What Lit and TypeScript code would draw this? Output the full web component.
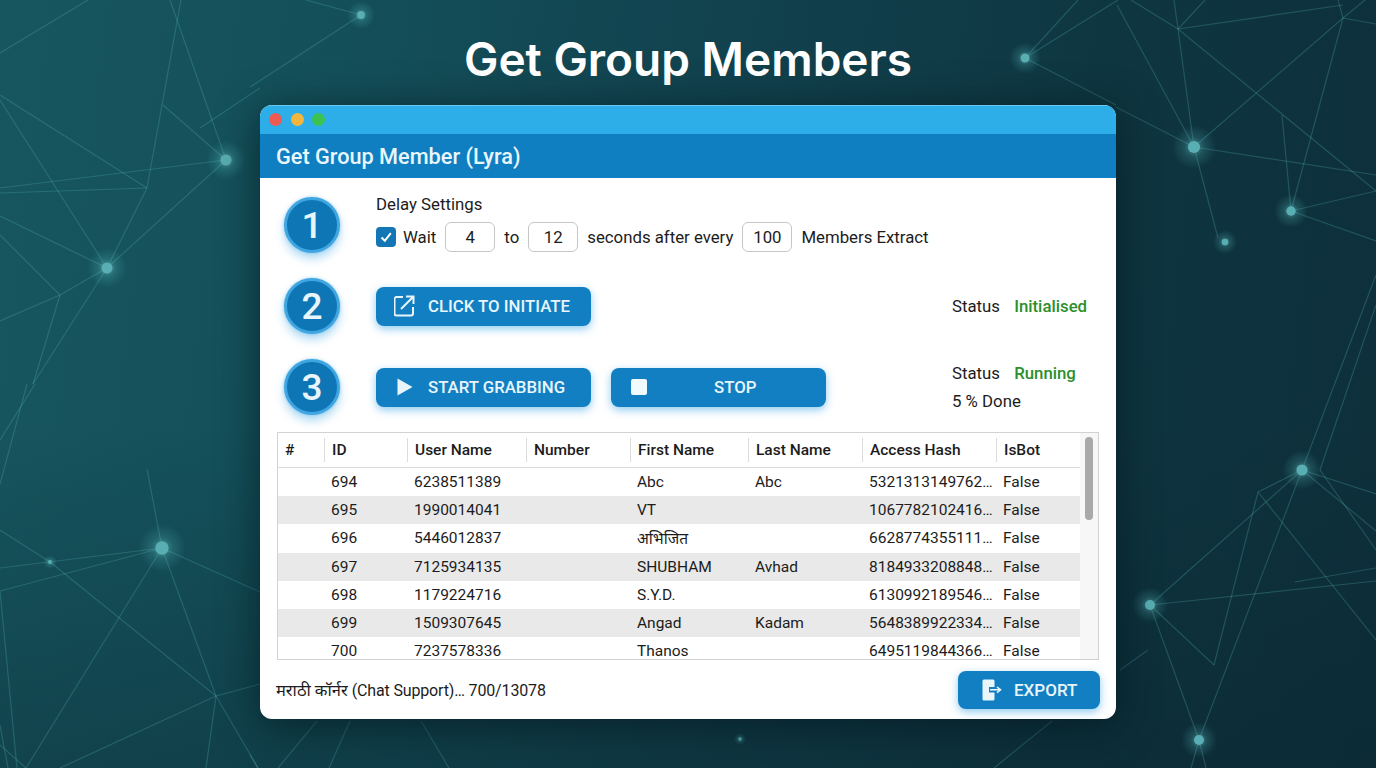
import { LitElement, html, css, svg } from "lit";
import { customElement } from "lit/decorators.js";

// fondo: nodos brillantes [x, y, radio del halo]
const NODES: number[][] = [
  [226, 160, 20], [107, 268, 20], [361, 15, 14], [1025, 58, 16], [1194, 147, 22],
  [1291, 211, 17], [1225, 242, 12], [1302, 470, 20], [1150, 605, 18], [1199, 740, 18],
  [162, 548, 24], [50, 562, 7], [740, 739, 6],
];

// fondo: segmentos [x1, y1, x2, y2]
const LINES: number[][] = [
  [0, 53, 88, 0], [170, 0, 226, 160], [181, 0, 147, 188], [147, 188, 107, 268],
  [0, 95, 147, 188], [0, 100, 107, 268], [0, 188, 226, 160], [0, 193, 147, 188],
  [0, 216, 107, 268], [0, 235, 60, 295], [107, 268, 60, 295], [60, 295, 0, 321],
  [60, 295, 33, 384], [107, 268, 33, 384], [226, 160, 107, 268], [163, 105, 226, 160],
  [200, 128, 260, 88], [306, 0, 361, 15], [361, 15, 250, 87],
  [1025, 58, 1078, 0], [1025, 58, 1118, 0], [1025, 58, 1116, 105],
  [1117, 5, 1194, 147], [1131, 0, 1178, 29], [1174, 0, 1178, 29], [1178, 29, 1194, 147],
  [1205, 0, 1178, 29], [1178, 29, 1343, 5], [1178, 29, 1376, 191], [1194, 147, 1343, 18],
  [1343, 18, 1338, 0], [1343, 18, 1365, 0], [1343, 18, 1376, 24], [1343, 18, 1291, 211],
  [1282, 115, 1291, 211], [1116, 107, 1194, 147], [1194, 147, 1376, 175], [1194, 147, 1218, 238],
  [1291, 211, 1376, 191], [1291, 211, 1376, 241], [1376, 275, 1302, 470], [1376, 305, 1320, 470],
  [1302, 470, 1376, 494], [1302, 470, 1376, 531], [1302, 470, 1150, 605], [1302, 470, 1258, 492],
  [1258, 492, 1214, 665], [1214, 665, 1150, 605], [1258, 492, 1376, 640], [1150, 605, 1376, 581],
  [1295, 582, 1376, 568], [1150, 605, 1199, 740], [1302, 470, 1199, 740], [1120, 670, 1148, 650],
  [1199, 740, 1191, 768], [1199, 740, 1206, 768], [1320, 470, 1376, 550],
  [35, 384, 0, 440], [27, 384, 0, 484], [147, 469, 162, 548], [162, 548, 0, 568],
  [162, 548, 0, 591], [0, 530, 50, 562], [50, 562, 216, 696], [162, 548, 260, 592],
  [162, 548, 216, 696], [162, 548, 26, 768], [216, 696, 260, 684], [216, 696, 60, 768],
  [216, 696, 258, 768], [216, 696, 206, 768], [0, 591, 17, 768], [0, 745, 26, 768], [0, 725, 8, 768],
  [317, 721, 278, 768], [350, 721, 329, 768], [421, 721, 449, 768], [1052, 721, 994, 768],
  [250, 755, 258, 768],
];

const ROWS: string[][] = [
  ["694", "6238511389", "", "Abc", "Abc", "5321313149762…", "False"],
  ["695", "1990014041", "", "VT", "", "1067782102416…", "False"],
  ["696", "5446012837", "", "अभिजित", "", "6628774355111…", "False"],
  ["697", "7125934135", "", "SHUBHAM", "Avhad", "8184933208848…", "False"],
  ["698", "1179224716", "", "S.Y.D.", "", "6130992189546…", "False"],
  ["699", "1509307645", "", "Angad", "Kadam", "5648389922334…", "False"],
  ["700", "7237578336", "", "Thanos", "", "6495119844366…", "False"],
];

const HEADERS = ["#", "ID", "User Name", "Number", "First Name", "Last Name", "Access Hash", "IsBot"];
const WIDTHS = [46, 83, 119, 104, 118, 114, 134, 84];

@customElement("app-root")
export class AppRoot extends LitElement {
  static styles = css`
    :host {
      display: block;
      position: relative;
      height: 768px;
      overflow: hidden;
      font-family: Roboto, "Noto Sans", sans-serif;
      font-size: 16.8px;
      color: #1c1c1c;
      background:
        linear-gradient(180deg, rgba(12, 40, 50, 0) 55%, rgba(10, 36, 46, 0.35) 100%),
        linear-gradient(97deg, #17565f 0%, #14505a 22%, #11424e 50%, #0e3540 78%, #0d2f3b 100%);
    }
    .net {
      position: absolute;
      inset: 0;
      filter: blur(0.35px);
    }
    .page {
      position: relative;
      display: flex;
      flex-direction: column;
      align-items: center;
    }
    h1 {
      margin: 0;
      padding-top: 31px;
      height: 105px;
      flex: none;
      box-sizing: border-box;
      font-family: Inter, sans-serif;
      font-size: 46px;
      line-height: 56px;
      font-weight: 600;
      color: #fff;
    }
    .window {
      width: 856px;
      height: 614px;
      flex: none;
      background: #fff;
      border-radius: 12px;
      overflow: hidden;
      box-shadow: 0 6px 40px rgba(3, 20, 26, 0.65);
      display: flex;
      flex-direction: column;
    }
    .titlebar {
      height: 29px;
      flex: none;
      display: flex;
      align-items: center;
      gap: 8.5px;
      padding-left: 9px;
      box-sizing: border-box;
      background: #2daee9;
      box-shadow: inset 0 1px 0 #6cc8f0;
    }
    .dot {
      width: 13px;
      height: 13px;
      border-radius: 50%;
    }
    .header {
      height: 44px;
      flex: none;
      padding-left: 16px;
      display: flex;
      align-items: center;
      background: #0f7fc1;
      color: #e9f7fd;
      font-size: 21.7px;
      font-weight: 500;
    }
    .step {
      display: flex;
      padding-left: 24px;
    }
    .step.one {
      margin-top: 16px;
      align-items: flex-start;
    }
    .step.two {
      margin-top: 25px;
      align-items: center;
    }
    .step.three {
      margin-top: 25px;
      align-items: center;
    }
    .num {
      width: 56px;
      height: 56px;
      flex: none;
      box-sizing: border-box;
      border-radius: 50%;
      border: 3px solid #3fa6e2;
      background: #0f76b5;
      box-shadow: 0 6px 10px rgba(50, 160, 225, 0.38), 0 0 3px rgba(50, 160, 225, 0.5);
      color: #e8f6fc;
      font-size: 37px;
      font-weight: 500;
      display: flex;
      align-items: center;
      justify-content: center;
      margin-right: 36px;
    }
    .one .num {
      margin-top: 3px;
    }
    .delay .label {
      line-height: 20px;
    }
    .delay .line {
      display: flex;
      align-items: center;
      height: 30px;
      margin-top: 8px;
    }
    .check {
      width: 20px;
      height: 20px;
      border-radius: 4px;
      background: #1477b5;
      margin-right: 7px;
      display: flex;
      align-items: center;
      justify-content: center;
    }
    .field {
      width: 50px;
      height: 30px;
      box-sizing: border-box;
      border: 1px solid #c6c6c6;
      border-radius: 6px;
      display: flex;
      align-items: center;
      justify-content: center;
      margin: 0 9px;
    }
    .btn {
      height: 39px;
      width: 214.5px;
      flex: none;
      box-sizing: border-box;
      border-radius: 8px;
      background: #127fc2;
      color: #e8f6fc;
      font-size: 16.8px;
      font-weight: 500;
      display: flex;
      align-items: center;
      box-shadow: 0 3px 8px rgba(50, 160, 225, 0.55);
    }
    .btn .ico {
      width: 52px;
      flex: none;
      display: flex;
      justify-content: center;
      padding-left: 5px;
      box-sizing: border-box;
    }
    .btn.stop {
      margin-left: 20.5px;
      width: 215px;
    }
    .btn.stop .ico {
      width: 103px;
      padding-left: 20px;
      justify-content: flex-start;
    }
    .status {
      margin-left: auto;
      width: 164px;
      flex: none;
      line-height: 28px;
    }
    .status b {
      font-weight: 500;
      color: #2b8f2b;
      margin-left: 10px;
    }
    .grid {
      margin: 17px 17px 0;
      height: 228px;
      flex: none;
      box-sizing: border-box;
      border: 1px solid #d2d2d2;
      display: flex;
      overflow: hidden;
    }
    table {
      width: 802px;
      flex: none;
      table-layout: fixed;
      border-collapse: collapse;
      font-size: 15.5px;
      align-self: flex-start;
    }
    th {
      height: 34px;
      padding: 0 0 0 8px;
      text-align: left;
      font-weight: 500;
      border-bottom: 1px solid #dcdcdc;
      position: relative;
    }
    th:first-child {
      padding-left: 7px;
    }
    th + th::before {
      content: "";
      position: absolute;
      left: 0;
      top: 5px;
      bottom: 5px;
      width: 1px;
      background: #dcdcdc;
    }
    td {
      height: 28.2px;
      padding: 0 0 0 7px;
      white-space: nowrap;
      overflow: hidden;
    }
    tbody tr:nth-child(even) {
      background: #e9e9e9;
    }
    .track {
      flex: 1;
      padding: 4px 5px;
      background: #f7f7f7;
    }
    .thumb {
      height: 83px;
      border-radius: 5px;
      background: #a9a9a9;
    }
    .footer {
      flex: 1;
      display: flex;
      align-items: center;
      justify-content: space-between;
      padding: 0 16px;
    }
    .progress {
      font-size: 16px;
    }
    .progress .mr {
      font-size: 16.5px;
    }
    .progress .en {
      letter-spacing: -0.15px;
    }
    .btn.export {
      width: 142px;
      height: 38px;
      font-size: 17px;
    }
    .btn.export .ico {
      width: 56px;
      padding-left: 12px;
    }
  `;

  private net() {
    return html`<svg class="net" width="1376" height="768" viewBox="0 0 1376 768">
      <defs>
        <radialGradient id="halo">
          <stop offset="0" stop-color="#7fe0e0" stop-opacity="0.55"></stop>
          <stop offset="0.45" stop-color="#62c8c8" stop-opacity="0.2"></stop>
          <stop offset="1" stop-color="#62c8c8" stop-opacity="0"></stop>
        </radialGradient>
      </defs>
      ${LINES.map(
        ([x1, y1, x2, y2]) =>
          svg`<line x1=${x1} y1=${y1} x2=${x2} y2=${y2} stroke="#58b4b4" stroke-opacity="0.27" stroke-width="1.2"></line>`,
      )}
      ${NODES.map(
        ([x, y, r]) => svg`
          <circle cx=${x} cy=${y} r=${r} fill="url(#halo)"></circle>
          <circle cx=${x} cy=${y} r=${r / 3.6} fill="#58aeb2"></circle>`,
      )}
    </svg>`;
  }

  render() {
    return html`
      ${this.net()}
      <div class="page">
        <h1>Get Group Members</h1>
        <div class="window">
          <div class="titlebar">
            <span class="dot" style="background:#ec5a52"></span>
            <span class="dot" style="background:#f3b53c"></span>
            <span class="dot" style="background:#3cc251"></span>
          </div>
          <div class="header">Get Group Member (Lyra)</div>

          <div class="step one">
            <div class="num">1</div>
            <div class="delay">
              <div class="label">Delay Settings</div>
              <div class="line">
                <span class="check">
                  <svg width="14" height="14" viewBox="0 0 14 14" fill="none" stroke="#fff" stroke-width="2">
                    <path d="M2.5 7.5 L5.8 10.8 L11.8 3.2"></path>
                  </svg>
                </span>
                <span>Wait</span>
                <span class="field">4</span>
                <span>to</span>
                <span class="field">12</span>
                <span>seconds after every</span>
                <span class="field">100</span>
                <span>Members Extract</span>
              </div>
            </div>
          </div>

          <div class="step two">
            <div class="num">2</div>
            <div class="btn">
              <span class="ico">
                <svg width="22" height="22" viewBox="1 0 22 22" fill="none" stroke="#e8f6fc" stroke-width="2">
                  <path d="M10 2 H3.5 A2 2 0 0 0 1.5 4 V18.5 A2 2 0 0 0 3.5 20.5 H18 A2 2 0 0 0 20 18.5 V12"></path>
                  <path d="M8 14 L20 2 M13 1.5 H20.5 V9"></path>
                </svg>
              </span>
              <span>CLICK TO INITIATE</span>
            </div>
            <div class="status">Status <b>Initialised</b></div>
          </div>

          <div class="step three">
            <div class="num">3</div>
            <div class="btn">
              <span class="ico">
                <svg width="16" height="18" viewBox="0 0 16 18"><path d="M0.5 0.5 L15.5 9 L0.5 17.5 Z" fill="#e8f6fc"></path></svg>
              </span>
              <span>START GRABBING</span>
            </div>
            <div class="btn stop">
              <span class="ico">
                <svg width="16" height="16" viewBox="0 0 16 16"><rect width="16" height="16" rx="2" fill="#f2fafe"></rect></svg>
              </span>
              <span>STOP</span>
            </div>
            <div class="status">Status <b>Running</b><br />5 % Done</div>
          </div>

          <div class="grid">
            <table>
              <colgroup>${WIDTHS.map((w) => html`<col style="width:${w}px" />`)}</colgroup>
              <thead>
                <tr>${HEADERS.map((h) => html`<th>${h}</th>`)}</tr>
              </thead>
              <tbody>
                ${ROWS.map(
                  (r) => html`<tr><td></td>${r.map((c) => html`<td>${c}</td>`)}</tr>`,
                )}
              </tbody>
            </table>
            <div class="track"><div class="thumb"></div></div>
          </div>

          <div class="footer">
            <span class="progress"><span class="mr">मराठी कॉर्नर</span> <span class="en">(Chat Support)… 700/13078</span></span>
            <div class="btn export">
              <span class="ico">
                <svg width="20" height="22" viewBox="0 0 20 22">
                  <path d="M2 0.5 H11 A1.5 1.5 0 0 1 12.5 2 V8 H7 V13.5 H12.5 V20 A1.5 1.5 0 0 1 11 21.5 H2 A1.5 1.5 0 0 1 0.5 20 V2 A1.5 1.5 0 0 1 2 0.5 Z" fill="#e8f6fc"></path>
                  <path d="M8 10.8 H18 M15 8 L18.5 10.8 L15 13.6" fill="none" stroke="#e8f6fc" stroke-width="1.6"></path>
                </svg>
              </span>
              <span>EXPORT</span>
            </div>
          </div>
        </div>
      </div>
    `;
  }
}
